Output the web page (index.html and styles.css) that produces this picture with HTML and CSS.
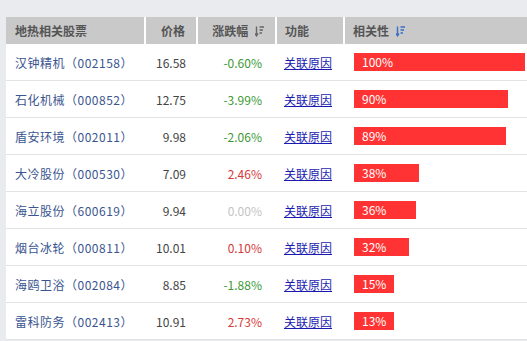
FILE: index.html
```html
<!DOCTYPE html>
<html lang="zh-CN">
<head>
    <meta charset="UTF-8">
    <title>地热相关股票</title>
    <link rel="stylesheet" href="styles.css">
</head>
<body>
    <div class="panel">
        <table class="stock-table">
            <colgroup>
                <col class="c-name">
                <col class="c-price">
                <col class="c-change">
                <col class="c-func">
                <col class="c-corr">
            </colgroup>
            <thead>
                <tr>
                    <th class="left">地热相关股票</th>
                    <th class="right">价格</th>
                    <th class="right">涨跌幅 <svg class="sort-icon" width="9" height="11" viewBox="0 0 9 11"><path d="M1.5 0.5V9.5M0 7.5L1.5 9.8L3 7.5M4.5 1H9M4.5 4H8M4.5 7H7" stroke="#666" stroke-width="1.4" fill="none"/></svg></th>
                    <th class="left">功能</th>
                    <th class="left">相关性 <svg class="sort-icon" width="9" height="11" viewBox="0 0 9 11"><path d="M1.5 0.5V9.5M0 7.5L1.5 9.8L3 7.5M4.5 1H9M4.5 4H8M4.5 7H7" stroke="#3b6fc6" stroke-width="1.4" fill="none"/></svg></th>
                </tr>
            </thead>
            <tbody>
                <!-- 股票列表 -->
                <tr>
                    <td class="name">汉钟精机（002158）</td>
                    <td class="price">16.58</td>
                    <td class="change down">-0.60%</td>
                    <td><a href="#" class="reason">关联原因</a></td>
                    <td><div class="bar" style="width: 171px;">100%</div></td>
                </tr>
                <tr>
                    <td class="name">石化机械（000852）</td>
                    <td class="price">12.75</td>
                    <td class="change down">-3.99%</td>
                    <td><a href="#" class="reason">关联原因</a></td>
                    <td><div class="bar" style="width: 154px;">90%</div></td>
                </tr>
                <tr>
                    <td class="name">盾安环境（002011）</td>
                    <td class="price">9.98</td>
                    <td class="change down">-2.06%</td>
                    <td><a href="#" class="reason">关联原因</a></td>
                    <td><div class="bar" style="width: 152px;">89%</div></td>
                </tr>
                <tr>
                    <td class="name">大冷股份（000530）</td>
                    <td class="price">7.09</td>
                    <td class="change up">2.46%</td>
                    <td><a href="#" class="reason">关联原因</a></td>
                    <td><div class="bar" style="width: 65px;">38%</div></td>
                </tr>
                <tr>
                    <td class="name">海立股份（600619）</td>
                    <td class="price">9.94</td>
                    <td class="change flat">0.00%</td>
                    <td><a href="#" class="reason">关联原因</a></td>
                    <td><div class="bar" style="width: 62px;">36%</div></td>
                </tr>
                <tr>
                    <td class="name">烟台冰轮（000811）</td>
                    <td class="price">10.01</td>
                    <td class="change up">0.10%</td>
                    <td><a href="#" class="reason">关联原因</a></td>
                    <td><div class="bar" style="width: 55px;">32%</div></td>
                </tr>
                <tr>
                    <td class="name">海鸥卫浴（002084）</td>
                    <td class="price">8.85</td>
                    <td class="change down">-1.88%</td>
                    <td><a href="#" class="reason">关联原因</a></td>
                    <td><div class="bar" style="width: 40px;">15%</div></td>
                </tr>
                <tr>
                    <td class="name">雷科防务（002413）</td>
                    <td class="price">10.91</td>
                    <td class="change up">2.73%</td>
                    <td><a href="#" class="reason">关联原因</a></td>
                    <td><div class="bar" style="width: 40px;">13%</div></td>
                </tr>
            </tbody>
        </table>
    </div>
</body>
</html>
```

FILE: styles.css
```css
/* General Styles */
body {
    margin: 0;
    padding: 0;
    background-color: #e9ebee;
    font-family: "Noto Sans CJK SC", "Noto Sans", sans-serif;
    font-size: 12px;
    overflow: hidden;
}

.panel {
    margin: 17px 0 0 6px;
    width: 540px;
    background-color: #fff;
}

.stock-table {
    width: 100%;
    border-collapse: collapse;
    table-layout: fixed;
}

.c-name { width: 139px; }
.c-price { width: 52px; }
.c-change { width: 79px; }
.c-func { width: 68px; }

/* Header */
.stock-table th {
    height: 27px;
    padding: 0 8px;
    background-color: #c9c9c9;
    color: #555;
    font-weight: bold;
    font-size: 12px;
    border-left: 2px solid #fff;
    white-space: nowrap;
}

.stock-table th:first-child {
    border-left: none;
    padding-left: 9px;
}

.stock-table th.left { text-align: left; }
.stock-table th.right { text-align: right; padding-right: 11px; }

.sort-icon {
    margin-left: 4px;
    vertical-align: -1px;
}

/* Rows */
.stock-table td {
    height: 36px;
    padding: 0 8px;
    border-bottom: 1px solid #e3e3e3;
    white-space: nowrap;
}

.name {
    color: #3a5590;
    letter-spacing: 0.5px;
    padding-left: 9px !important;
}

.price {
    color: #444;
    text-align: right;
    padding-right: 11px !important;
}

.change {
    text-align: right;
    padding-right: 14px !important;
}

.down { color: #3d9a35; }
.up { color: #d63a3a; }
.flat { color: #c4c4c4; }

.reason {
    color: #1a1ab0;
    text-decoration: underline;
}

.bar {
    height: 18px;
    line-height: 18px;
    background-color: #ff3333;
    color: #fff;
    font-size: 12px;
    padding-left: 8px;
    box-sizing: border-box;
    margin-left: 2px;
}
```
